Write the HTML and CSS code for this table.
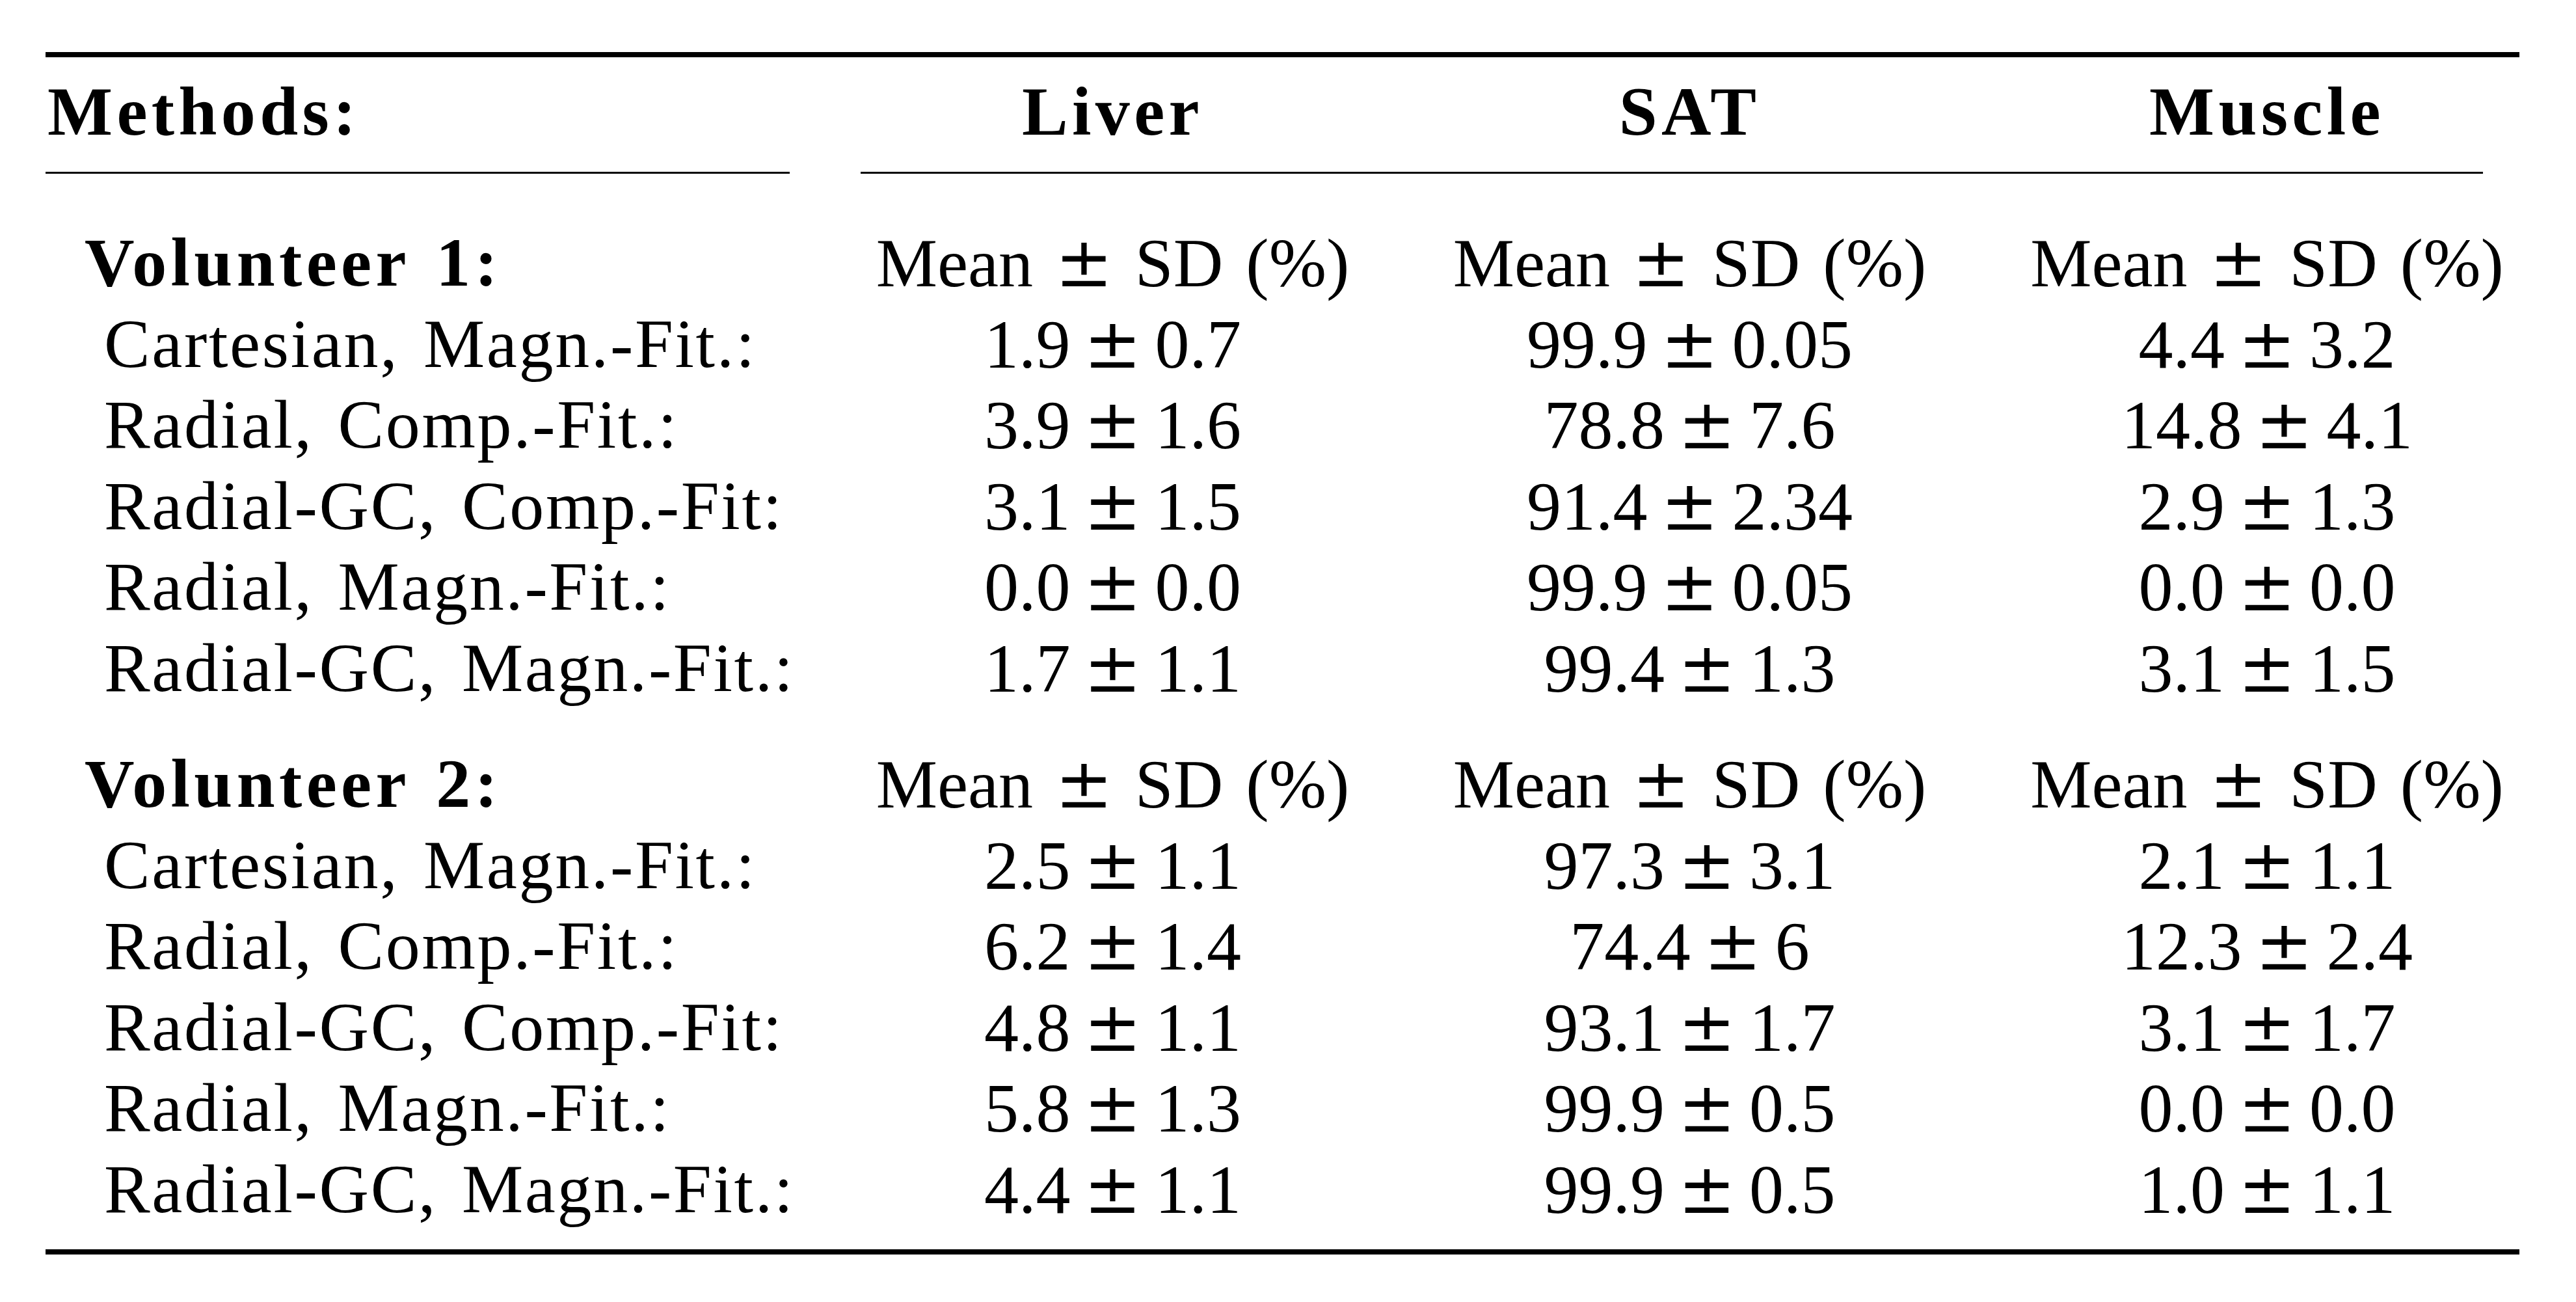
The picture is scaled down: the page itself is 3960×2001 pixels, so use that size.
FILE: index.html
```html
<!DOCTYPE html>
<html lang="en">
<head>
<meta charset="utf-8">
<title>Methods table</title>
<link rel="stylesheet" href="styles.css">
</head>
<body>
<div class="page">
  <div class="rule-heavy"></div>
  <div class="row head">
    <div class="methods-h">Methods:</div>
    <div class="c">Liver</div>
    <div class="c">SAT</div>
    <div class="c last">Muscle</div>
  </div>
  <div class="cmid">
    <div class="cmid-a"></div>
    <div class="cmid-b"></div>
  </div>

  <div class="group">
    <div class="row">
      <div class="vol">Volunteer 1:</div>
      <div class="c txt">Mean <span class="pm">±</span> SD (%)</div>
      <div class="c txt">Mean <span class="pm">±</span> SD (%)</div>
      <div class="c txt last">Mean <span class="pm">±</span> SD (%)</div>
    </div>
    <div class="row">
      <div class="method">Cartesian, Magn.-Fit.:</div>
      <div class="c num">1.9 <span class="pm">±</span> 0.7</div>
      <div class="c num">99.9 <span class="pm">±</span> 0.05</div>
      <div class="c num last">4.4 <span class="pm">±</span> 3.2</div>
    </div>
    <div class="row">
      <div class="method">Radial, Comp.-Fit.:</div>
      <div class="c num">3.9 <span class="pm">±</span> 1.6</div>
      <div class="c num">78.8 <span class="pm">±</span> 7.6</div>
      <div class="c num last">14.8 <span class="pm">±</span> 4.1</div>
    </div>
    <div class="row">
      <div class="method">Radial-GC, Comp.-Fit:</div>
      <div class="c num">3.1 <span class="pm">±</span> 1.5</div>
      <div class="c num">91.4 <span class="pm">±</span> 2.34</div>
      <div class="c num last">2.9 <span class="pm">±</span> 1.3</div>
    </div>
    <div class="row">
      <div class="method">Radial, Magn.-Fit.:</div>
      <div class="c num">0.0 <span class="pm">±</span> 0.0</div>
      <div class="c num">99.9 <span class="pm">±</span> 0.05</div>
      <div class="c num last">0.0 <span class="pm">±</span> 0.0</div>
    </div>
    <div class="row">
      <div class="method">Radial-GC, Magn.-Fit.:</div>
      <div class="c num">1.7 <span class="pm">±</span> 1.1</div>
      <div class="c num">99.4 <span class="pm">±</span> 1.3</div>
      <div class="c num last">3.1 <span class="pm">±</span> 1.5</div>
    </div>
  </div>

  <div class="group">
    <div class="row">
      <div class="vol">Volunteer 2:</div>
      <div class="c txt">Mean <span class="pm">±</span> SD (%)</div>
      <div class="c txt">Mean <span class="pm">±</span> SD (%)</div>
      <div class="c txt last">Mean <span class="pm">±</span> SD (%)</div>
    </div>
    <div class="row">
      <div class="method">Cartesian, Magn.-Fit.:</div>
      <div class="c num">2.5 <span class="pm">±</span> 1.1</div>
      <div class="c num">97.3 <span class="pm">±</span> 3.1</div>
      <div class="c num last">2.1 <span class="pm">±</span> 1.1</div>
    </div>
    <div class="row">
      <div class="method">Radial, Comp.-Fit.:</div>
      <div class="c num">6.2 <span class="pm">±</span> 1.4</div>
      <div class="c num">74.4 <span class="pm">±</span> 6</div>
      <div class="c num last">12.3 <span class="pm">±</span> 2.4</div>
    </div>
    <div class="row">
      <div class="method">Radial-GC, Comp.-Fit:</div>
      <div class="c num">4.8 <span class="pm">±</span> 1.1</div>
      <div class="c num">93.1 <span class="pm">±</span> 1.7</div>
      <div class="c num last">3.1 <span class="pm">±</span> 1.7</div>
    </div>
    <div class="row">
      <div class="method">Radial, Magn.-Fit.:</div>
      <div class="c num">5.8 <span class="pm">±</span> 1.3</div>
      <div class="c num">99.9 <span class="pm">±</span> 0.5</div>
      <div class="c num last">0.0 <span class="pm">±</span> 0.0</div>
    </div>
    <div class="row">
      <div class="method">Radial-GC, Magn.-Fit.:</div>
      <div class="c num">4.4 <span class="pm">±</span> 1.1</div>
      <div class="c num">99.9 <span class="pm">±</span> 0.5</div>
      <div class="c num last">1.0 <span class="pm">±</span> 1.1</div>
    </div>
  </div>

  <div class="rule-heavy bottom"></div>
</div>
</body>
</html>
```

FILE: styles.css
```css
html, body {
  margin: 0;
  padding: 0;
  background: #ffffff;
}

body {
  color: #000000;
  font-family: "Liberation Serif", "Times New Roman", serif;
  font-size: 106px;
}

.page {
  width: 3803px;
  padding: 80px 0 0 70px;
}

.rule-heavy {
  height: 8px;
  background: #000000;
}

.rule-heavy.bottom {
  margin-top: 30px;
}

.row {
  display: grid;
  grid-template-columns: 1197px 887px 887px 832px;
  height: 124.5px;
  line-height: 124.5px;
  white-space: nowrap;
}

.head {
  margin-top: 22px;
  font-weight: 700;
  letter-spacing: 0.06em;
  word-spacing: 0.08em;
}

.methods-h {
  padding-left: 3px;
}

.c {
  text-align: center;
}

.c.last {
  padding-left: 56px;
}

.cmid {
  display: grid;
  grid-template-columns: 1197px 2606px;
  height: 3px;
  margin-top: 29.5px;
}

.cmid-a {
  background: #000000;
  margin-right: 53px;
}

.cmid-b {
  background: #000000;
  margin: 0 56px;
}

.group {
  margin-top: 75px;
}

.group + .group {
  margin-top: 54px;
}

.vol {
  padding-left: 60px;
  font-weight: 700;
  letter-spacing: 0.06em;
  word-spacing: 0.08em;
}

.method {
  padding-left: 90px;
  letter-spacing: 0.025em;
  word-spacing: 0.08em;
}

.txt {
  word-spacing: 0.08em;
}

.num {
  letter-spacing: 0;
  word-spacing: 0;
}

.pm {
  font-family: "DejaVu Serif", serif;
  font-size: 1em;
  margin: 0 -6px;
}

.txt .pm {
  margin: 0 -1px;
}
```
